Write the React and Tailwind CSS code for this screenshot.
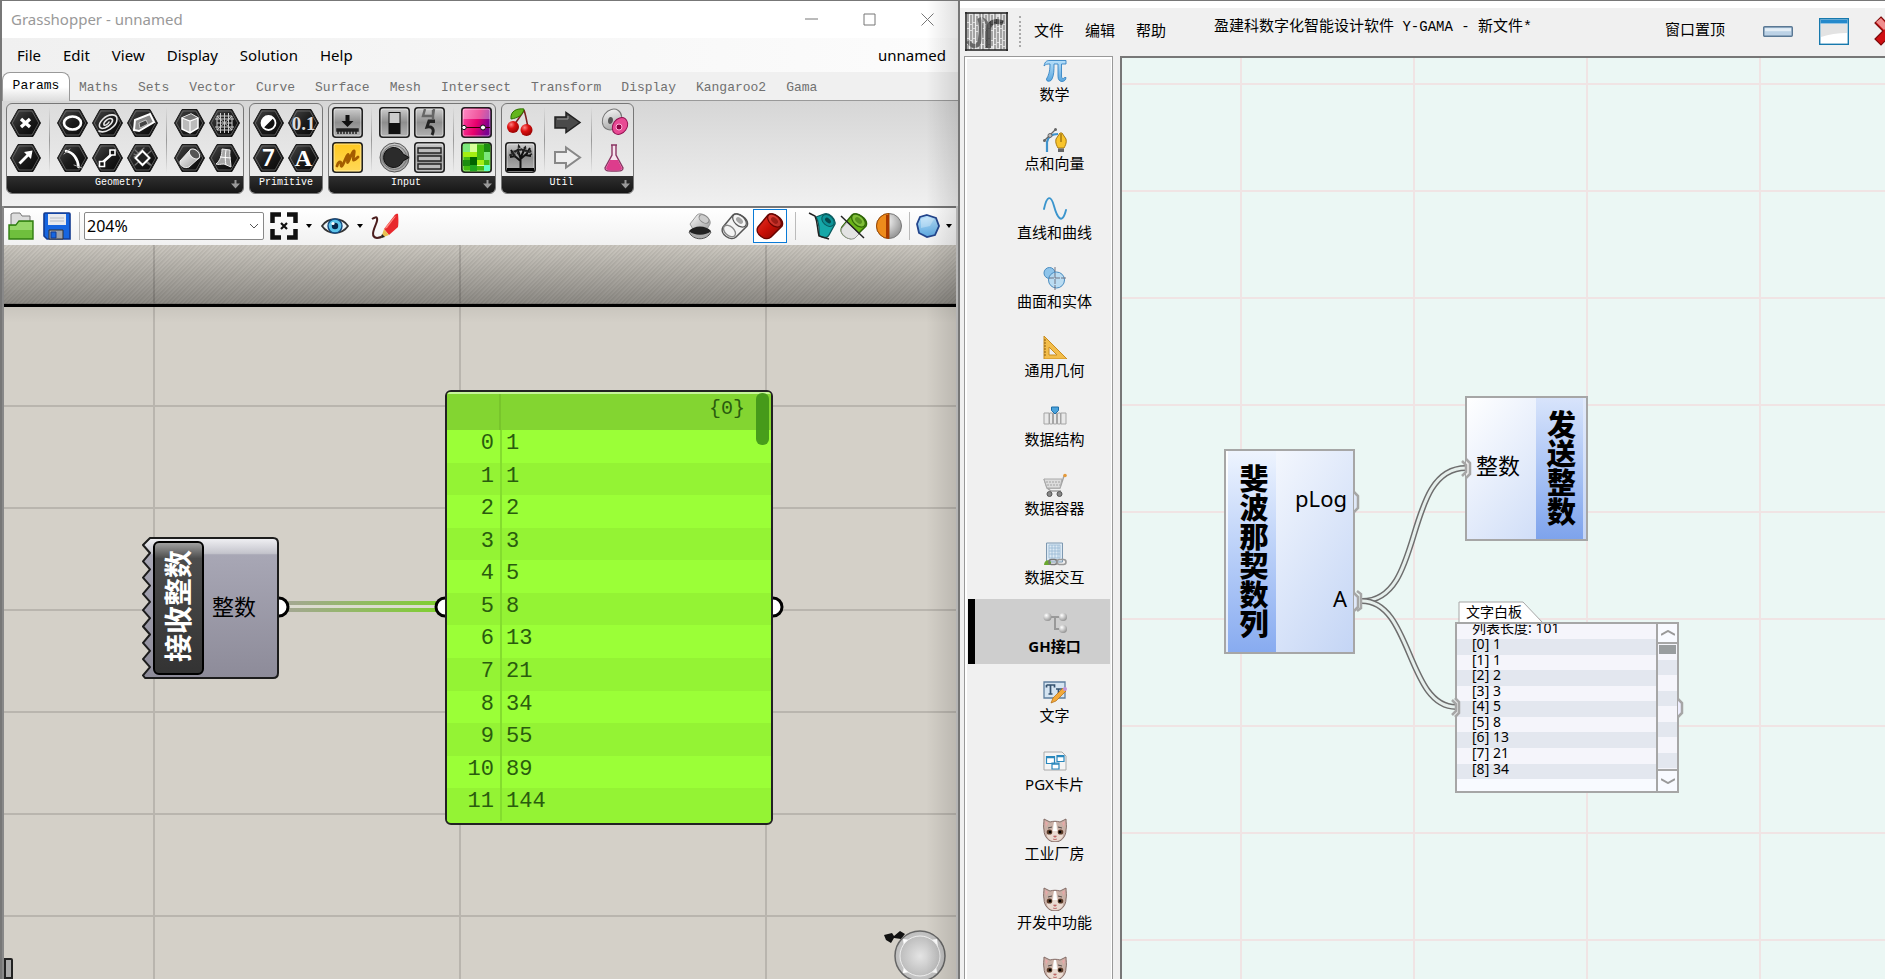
import React from "react";

const FIB = [1, 1, 2, 3, 5, 8, 13, 21, 34, 55, 89, 144];
const TABS = ["Maths", "Sets", "Vector", "Curve", "Surface", "Mesh", "Intersect", "Transform", "Display", "Kangaroo2", "Gama"];

function SharedGradients() {
  return (
    <svg className="absolute size-0" aria-hidden="true">
      <defs>
        <linearGradient id="hex" x1="0" y1="0" x2="1" y2="1">
          <stop offset="0" stopColor="#4a4a4a" />
          <stop offset="0.5" stopColor="#1c1c1c" />
          <stop offset="1" stopColor="#050505" />
        </linearGradient>
        <linearGradient id="steel" x1="0" y1="0" x2="0" y2="1">
          <stop offset="0" stopColor="#d0d0d0" />
          <stop offset="0.5" stopColor="#8e8e8e" />
          <stop offset="1" stopColor="#b4b4b4" />
        </linearGradient>
        <linearGradient id="silver" x1="0" y1="0" x2="1" y2="1">
          <stop offset="0" stopColor="#ffffff" />
          <stop offset="1" stopColor="#9a9a9a" />
        </linearGradient>
        <linearGradient id="pink" x1="0" y1="0" x2="1" y2="0.3">
          <stop offset="0" stopColor="#ff4fa8" />
          <stop offset="0.6" stopColor="#e8006c" />
          <stop offset="1" stopColor="#7c0090" />
        </linearGradient>
        <linearGradient id="yellow" x1="0" y1="0" x2="0" y2="1">
          <stop offset="0" stopColor="#ffc81e" />
          <stop offset="1" stopColor="#ffd95a" />
        </linearGradient>
        <linearGradient id="blue" x1="0" y1="0" x2="0" y2="1">
          <stop offset="0" stopColor="#b8e0fa" />
          <stop offset="1" stopColor="#5aa6de" />
        </linearGradient>
        <linearGradient id="red" x1="0" y1="0" x2="1" y2="1">
          <stop offset="0" stopColor="#e8382c" />
          <stop offset="0.5" stopColor="#c81006" />
          <stop offset="1" stopColor="#7a0600" />
        </linearGradient>
        <radialGradient id="cherry" cx="0.35" cy="0.3" r="0.8">
          <stop offset="0" stopColor="#ff8080" />
          <stop offset="0.4" stopColor="#dd1010" />
          <stop offset="1" stopColor="#8c0000" />
        </radialGradient>
        <radialGradient id="ball" cx="0.35" cy="0.3" r="0.8">
          <stop offset="0" stopColor="#ffffff" />
          <stop offset="1" stopColor="#8a8a8a" />
        </radialGradient>
        <radialGradient id="compass" cx="0.5" cy="0.5" r="0.5">
          <stop offset="0" stopColor="#e4e4e4" />
          <stop offset="1" stopColor="#bdbdbd" />
        </radialGradient>
      </defs>
    </svg>
  );
}

function Hex({ children }) {
  return (
    <svg viewBox="0 0 31 28" className="h-7 w-[31px]" aria-hidden="true">
      <polygon points="0.5,14 8,0.5 23,0.5 30.5,14 23,27.5 8,27.5" fill="url(#hex)" stroke="#1a1a1a" />
      <polygon points="2.3,14 9,2 22,2 28.7,14 22,26 9,26" fill="none" stroke="#777" strokeWidth="0.7" />
      {children}
    </svg>
  );
}

function Tile({ fill = "url(#steel)", children }) {
  return (
    <svg viewBox="0 0 31 31" className="size-[31px]" aria-hidden="true">
      <rect x="0.8" y="0.8" width="29.4" height="29.4" rx="3" fill={fill} stroke="#222" strokeWidth="1.6" />
      <rect x="2.2" y="2.2" width="26.6" height="26.6" rx="2" fill="none" stroke="#fff" strokeOpacity="0.5" strokeWidth="0.8" />
      {children}
    </svg>
  );
}

const w = { fill: "none", stroke: "#fff", strokeWidth: 2, strokeLinecap: "round", strokeLinejoin: "round" };

const ICONS = {
  Point: <Hex><path {...w} strokeWidth="3.4" strokeLinecap="butt" d="M11 10l9 8M20 10l-9 8" /></Hex>,
  Vector: <Hex><path d="M8.5 18.500l8-8-2.500-2.500 8.500-1.500-1.500 8.500-2.500-2.500-8 8z" fill="#fff" /></Hex>,
  Circle: <Hex><ellipse cx="15.500" cy="14" rx="8.500" ry="6.500" {...w} strokeWidth="2.600" /></Hex>,
  "Circular Arc": <Hex><path {...w} strokeWidth="2.600" d="M9 7c7 1 12 8 12.500 16" /><path {...w} stroke="#aaa" strokeWidth="1" d="M7 10l6-5M17 21l8 3" /></Hex>,
  Curve: <Hex><path {...w} stroke="#e6e6e6" strokeWidth="1.600" d="M7 22c6 3 18-4 18-12 0-6-9-5-14 0-6 6-4 11 2 9 5-2 9-7 7-9-3-2-9 3-8 6 1 1 4-1 5-3" /></Hex>,
  Line: <Hex><path {...w} strokeWidth="2.600" d="M10.500 18.500l9.500-8.500" /><path d="M7.500 17.500h5v5h-5zM18 6h5v5h-5z" fill="#111" stroke="#fff" strokeWidth="1.600" /></Hex>,
  Plane: <Hex><path d="M8 11l15-6 4 8-15 9-5-1z" fill="#8a8a8a" stroke="#fff" strokeWidth="2" /><path d="M12 14l7-3 2 4-8 4z" fill="#444" stroke="#ddd" strokeWidth="0.800" /></Hex>,
  Rectangle: <Hex><path {...w} stroke="#777" strokeWidth="1.200" d="M7 10l16 11M8 21L24 7M8 6l16 15M7 13L17 4" /><path d="M15.500 7l7 7-7 7-7-7z" fill="#222" stroke="#fff" strokeWidth="2" /></Hex>,
  Box: <Hex><path d="M8 9l9-4 7 4v10l-8 5-8-4z" fill="#bbb" stroke="#fff" strokeWidth="1.500" /><path d="M8 9l9-4 7 4-8 3z" fill="#777" /><path d="M8 9l8 3 8-3M16 12v12" stroke="#fff" fill="none" strokeWidth="1.200" /></Hex>,
  Brep: <Hex><path d="M6 17L16 6l9 8-10 9c-4 2-10-1-9-6z" fill="url(#silver)" stroke="#eee" /><ellipse cx="20.500" cy="10" rx="6" ry="4" transform="rotate(40 20.500 10)" fill="#555" stroke="#eee" /></Hex>,
  Mesh: <Hex><path stroke="#ccc" fill="none" strokeWidth="1" d="M8 7h15v14H8zM8 14h15M15.500 4v20M8 7l15 14M23 7L8 21M6 10h19M6 18h19M11.500 4v20M19.500 4v20" /></Hex>,
  Surface: <Hex><path d="M13 5l8 1c-1 6 1 12 1 17l-7-3c-3 0-6 1-8 0 4-3 6-9 6-15z" fill="#a5a5a5" stroke="#eee" /><path d="M11 13l11 1M17 6c-1 6-1 10 0 15" stroke="#fff" fill="none" /></Hex>,
  Boolean: <Hex><circle cx="15.500" cy="14" r="7" fill="#111" /><path d="M8.500 14a7 7 0 0 1 12-5l-10 10a7 7 0 0 1-2-5z" fill="#fff" /><circle cx="15.500" cy="14" r="7" {...w} strokeWidth="1.800" /></Hex>,
  Integer: <Hex><text x="15.500" y="22" textAnchor="middle" fill="#fff" fontSize="22" fontWeight="700" fontFamily="Lato, sans-serif">7</text></Hex>,
  Number: <Hex><text x="15.500" y="21" textAnchor="middle" fill="#ddd" fontSize="19" fontWeight="700" fontFamily="Liberation Serif, serif">0.1</text></Hex>,
  Text: <Hex><text x="15.500" y="22" textAnchor="middle" fill="#fff" fontSize="24" fontWeight="700" fontFamily="Liberation Serif, serif">A</text></Hex>,
  Button: <Tile><path d="M13.500 8h4v6h4l-6 6-6-6h4z" fill="#111" /><path d="M5 22h21v2H5zM6 24v3M9 24v3M12 24v3M15 24v3M18 24v3M21 24v3M24 24v3" stroke="#222" strokeWidth="1.500" fill="#222" /></Tile>,
  Sketch: <Tile fill="url(#yellow)"><path d="M5 24c1-4 4-6 4-2s1 3 4-4 4-7 3-2-1 7 2 0 5-10 4-4-2 9 4 3" fill="none" stroke="#a35c00" strokeWidth="2.800" strokeLinecap="round" strokeLinejoin="round" /></Tile>,
  Toggle: <Tile><rect x="9.500" y="5" width="12" height="22" fill="#111" /><rect x="10.500" y="6" width="10" height="10" fill="#ccc" /></Tile>,
  Knob: (
    <svg viewBox="0 0 31 31" className="size-[31px]" aria-hidden="true">
      <circle cx="15.500" cy="15.500" r="14.500" fill="url(#steel)" stroke="#555" />
      <circle cx="15.500" cy="15.500" r="12" fill="none" stroke="#777" />
      <path d="M30 15.500l-6 3.500a10 10 0 1 1 0-7z" fill="#2b2b2b" stroke="#111" />
    </svg>
  ),
  Scroller: <Tile><path d="M11 2l-2 7h10l1-7M19 3v9" stroke="#666" strokeWidth="2.400" fill="none" /><path d="M21 14h-6l-2 6c5-1 8 2 5 8M14 14.500h7" stroke="#222" strokeWidth="3" fill="none" /></Tile>,
  "Value List": <Tile><path d="M4 6h23v5H4zM4 14h23v5H4zM4 22h23v5H4z" fill="#bbb" stroke="#222" strokeWidth="1.400" /></Tile>,
  Gradient: <Tile fill="url(#pink)"><path d="M2 2h27v10H2z" fill="#fff" fillOpacity="0.35" /><path d="M2 20.500h27" stroke="#300" strokeWidth="1.200" /><circle cx="3" cy="20.500" r="2.200" fill="#fff" stroke="#111" /><circle cx="22" cy="20.500" r="2.500" fill="#fff" stroke="#111" /></Tile>,
  Swatches: (
    <Tile fill="#44bb11">
      <path d="M2 2h7v8H2zM23 10h6v8h-6z" fill="#7be87b" />
      <path d="M9 2h7v8H9zM16 18h7v6h-7z" fill="#d8ff9a" />
      <path d="M2 10h14v5H2zM16 18h7v5h-7z" fill="#a4ee12" />
      <path d="M9 15h7v8H9z" fill="#006400" /><path d="M23 2h6v8h-6zM2 18h7v6H2z" fill="#1d8c10" />
      <path d="M23 23h6v6h-6z" fill="#5fffc0" /><path d="M9 23h7v6H9z" fill="#1fa51f" />
    </Tile>
  ),
  "Cherry Picker": (
    <svg viewBox="0 0 31 31" className="size-[31px]" aria-hidden="true">
      <path d="M19 3c-3 7-7 9-10 16M19 3c2 6 3 12 4 18" fill="none" stroke="#7a2020" strokeWidth="1.600" />
      <path d="M6 12c-1-8 6-11 13-10-1 6-6 9-13 10z" fill="#63b51c" stroke="#2e7000" />
      <circle cx="8" cy="20" r="6" fill="url(#cherry)" /><circle cx="21.500" cy="23" r="6" fill="url(#cherry)" />
    </svg>
  ),
  "Param Viewer": <Tile><path d="M2 26h27v3H2z" fill="#000" /><path d="M15.500 27V16M15.500 19l-7-6M15.500 17l7-6M15.500 16l-3-9M15.500 16l4-9M10 14l-5 1M20 13l6 1M9 13L6 8M22 11l3-5" stroke="#111" strokeWidth="2" fill="none" /><path d="M5 14l2-3 2 2 1-5 3 3 1-6 3 4 3-3 1 4 4-1 1 4" stroke="#222" strokeWidth="2.600" strokeDasharray="2 1" fill="none" /></Tile>,
  "Data Input": <svg viewBox="0 0 31 31" className="size-[31px]" aria-hidden="true"><path d="M3 10h11V5.500l14 10-14 10V21H3z" fill="#4a4a4a" stroke="#222" strokeWidth="1.500" /><path d="M5 12h11V9" stroke="#999" fill="none" /></svg>,
  "Data Output": <svg viewBox="0 0 31 31" className="size-[31px]" aria-hidden="true"><path d="M3 10h11V5.500l14 10-14 10V21H3z" fill="#eee" stroke="#888" strokeWidth="2" /></svg>,
  Cluster: (
    <svg viewBox="0 0 31 31" className="size-[31px]" aria-hidden="true">
      <ellipse cx="13" cy="12.500" rx="9" ry="11" transform="rotate(35 13 12.500)" fill="url(#silver)" stroke="#777" />
      <path d="M9 14c0-5 5-5 5-1s-5 6-5 1z" fill="#555" />
      <ellipse cx="21" cy="19" rx="7" ry="9" transform="rotate(35 21 19)" fill="#e84a94" stroke="#901050" />
      <circle cx="20" cy="20" r="3" fill="#8c0040" stroke="#ffb0d8" />
    </svg>
  ),
  Flask: (
    <svg viewBox="0 0 31 31" className="size-[31px]" aria-hidden="true">
      <path d="M12 3h6M13 3v10L6 26c0 3 2 3 9 3s9 0 9-3L17 13V3" fill="#f6e4ee" stroke="#8a3563" strokeWidth="1.400" />
      <path d="M11 18h8l4 8c0 2-2 2.500-8 2.500S7 28 7 26z" fill="#dd3c8c" />
    </svg>
  ),
};

const GROUPS = [
  { name: "Geometry", more: true, blocks: [[["Point", "Vector"]], [["Circle", "Circular Arc"], ["Curve", "Line"], ["Plane", "Rectangle"]], [["Box", "Brep"], ["Mesh", "Surface"]]] },
  { name: "Primitive", blocks: [[["Boolean", "Integer"], ["Number", "Text"]]] },
  { name: "Input", more: true, blocks: [[["Button", "Sketch"]], [["Toggle", "Knob"], ["Scroller", "Value List"]], [["Gradient", "Swatches"]]] },
  { name: "Util", more: true, blocks: [[["Cherry Picker", "Param Viewer"]], [["Data Input", "Data Output"]], [["Cluster", "Flask"]]] },
];

function RibbonGroup({ group }) {
  return (
    <section className="flex h-[91px] flex-col overflow-hidden rounded-md border border-[#777] bg-linear-to-b from-[#dcdcdc] to-[#efefef]">
      <div className="flex flex-1 items-center px-px">
        {group.blocks.map((block, i) => (
          <React.Fragment key={i}>
            {i > 0 && <span className="flex h-[66px] w-3 justify-center"><span className="w-px bg-linear-to-b from-transparent via-[#999] to-transparent" /></span>}
            {block.map((col) => (
              <div key={col[0]} className="flex flex-col">
                {col.map((n) => (
                  <button key={n} type="button" aria-label={n} className="flex h-[35px] w-[35px] items-center justify-center">{ICONS[n]}</button>
                ))}
              </div>
            ))}
          </React.Fragment>
        ))}
      </div>
      <footer className="flex h-[17px] bg-linear-to-b from-[#303030] to-[#161616] font-['Liberation_Mono',monospace] text-[10px] leading-[14px] text-white">
        <span className="flex-1 text-center">{group.name}</span>
        {group.more && (
          <svg viewBox="0 0 9 9" className="mr-[3px] mt-1 size-[9px]" aria-hidden="true"><path d="M3.500 0h2v3.500H9l-4.500 5L0 3.500h3.500z" fill="#999" /></svg>
        )}
      </footer>
    </section>
  );
}

function Capsule({ body, line, extra }) {
  return (
    <svg viewBox="0 0 28 28" className="size-7" aria-hidden="true">
      <path d="M2 15L12 3c4-4 17 4 14 11L15 25C10 30-2 22 2 15z" fill={body} stroke={line} strokeWidth="1.500" />
      <ellipse cx="18.500" cy="8.500" rx="8" ry="5" transform="rotate(42 18.500 8.500)" fill="#fff" fillOpacity="0.15" stroke={line} strokeWidth="1.200" />
      <ellipse cx="18.500" cy="8.500" rx="4" ry="2.500" transform="rotate(42 18.500 8.500)" fill={line} fillOpacity="0.5" />
      {extra}
    </svg>
  );
}

function Caret() {
  return <svg viewBox="0 0 6 4" className="h-1 w-1.5 shrink-0" aria-hidden="true"><path d="M0 0h6L3 4z" fill="#000" /></svg>;
}

function ToolButton({ label, children, className = "" }) {
  return <button type="button" aria-label={label} className={`flex h-[34px] shrink-0 items-center justify-center ${className}`}>{children}</button>;
}

function CanvasToolbar() {
  return (
    <div className="flex h-[39px] shrink-0 items-center border-t-2 border-[#777] bg-linear-to-b from-white to-[#f1f1f1] pb-0.5 pl-1 pr-1">
      <ToolButton label="Open" className="w-[26px]">
        <svg viewBox="0 0 26 28" className="h-7 w-[26px]" aria-hidden="true">
          <path d="M3 15V2l2-1h7l2 3h8v14H3z" fill="#ddd" stroke="#777" />
          <path d="M1 27V13h7l3-4h14v18z" fill="#6fbf3d" stroke="#2f7d10" strokeWidth="1.400" /><path d="M2 14h6l3-4h13v8H2z" fill="#a6df7c" fillOpacity="0.700" />
        </svg>
      </ToolButton>
      <ToolButton label="Save" className="ml-[9px] w-7">
        <svg viewBox="0 0 28 28" className="size-7" aria-hidden="true">
          <path d="M1 2q0-1 1-1h24q1 0 1 1v25H4l-3-3z" fill="#1565e0" stroke="#123a90" strokeWidth="1.600" />
          <path d="M5 2h18v11H5z" fill="#e8eaee" /><path d="M7 6h14M7 9h14" stroke="#b8bcc4" />
          <path d="M6 18h14v9H6z" fill="#9aa0aa" stroke="#333" /><path d="M8 20h5v6H8z" fill="#1565e0" stroke="#123a90" />
        </svg>
      </ToolButton>
      <span className="ml-2 h-7 w-px bg-[#bbb]" />
      <div className="ml-1 flex h-7 w-[180px] items-center rounded-[2px] border border-[#888] bg-white px-0.5">
        <select aria-label="Zoom" defaultValue="204%" className="h-full flex-1 appearance-none bg-white text-[16px] leading-none text-black outline-none">
          <option>204%</option>
          <option>100%</option>
          <option>50%</option>
        </select>
        <svg viewBox="0 0 10 6" className="pointer-events-none mr-0.5 h-1.5 w-2.5" aria-hidden="true"><path d="M1 1l4 4 4-4" fill="none" stroke="#555" /></svg>
      </div>
      <ToolButton label="Zoom extents" className="ml-1.5 w-7">
        <svg viewBox="0 0 28 28" className="size-7" aria-hidden="true">
          <path d="M2.500 11V2.500H11M17 2.500h8.500V11M25.500 17v8.500H17M11 25.500H2.500V17" fill="none" stroke="#111" strokeWidth="4.500" />
          <path d="M11 11l6 6M17 11l-6 6" stroke="#111" strokeWidth="2.200" />
        </svg>
      </ToolButton>
      <span className="ml-2"><Caret /></span>
      <ToolButton label="Preview" className="ml-[9px] w-7">
        <svg viewBox="0 0 28 20" className="h-5 w-7" aria-hidden="true">
          <path d="M1 10C7 1 21 1 27 10 21 19 7 19 1 10z" fill="#eef4f6" stroke="#333" strokeWidth="1.800" />
          <circle cx="14" cy="10" r="7" fill="#5cc4ea" stroke="#134a80" strokeWidth="1.400" /><circle cx="14" cy="10" r="3.200" fill="#06264a" /><circle cx="12" cy="7.500" r="1.600" fill="#fff" />
        </svg>
      </ToolButton>
      <span className="ml-2"><Caret /></span>
      <ToolButton label="Sketch" className="ml-2 w-7">
        <svg viewBox="0 0 28 28" className="size-7" aria-hidden="true">
          <path d="M1 7c6-4 6 0 4 5s-6 13 1 14c3 0 5-1 7-3" fill="none" stroke="#4a1c1c" strokeWidth="2" />
          <path d="M13 17L23 4c2-3 4-2 4-2s1 8 0 13l-9 8z" fill="#e8282c" /><path d="M16 16L25 4l-2 1-10 12z" fill="#ff8a80" />
          <path d="M13 17l5 6-8 3z" fill="#e8c050" /><path d="M10 26l1-4 3 3z" fill="#222" />
        </svg>
      </ToolButton>
      <div className="ml-auto flex items-center">
        <ToolButton label="No preview" className="w-7">
          <svg viewBox="0 0 28 28" className="size-7" aria-hidden="true">
            <path d="M4 12L11 3c4-4 15 3 13 9l-4 7H8z" fill="url(#silver)" stroke="#999" /><ellipse cx="18" cy="7" rx="5.500" ry="3.500" transform="rotate(35 18 7)" fill="#ccc" stroke="#888" />
            <path d="M3 20c5-5 17-5 22 0-4 9-18 9-22 0z" fill="#aaa" stroke="#555" /><path d="M3 19c5-6 17-6 22 0-5 5-17 5-22 0z" fill="#222" />
          </svg>
        </ToolButton>
        <ToolButton label="Wireframe preview" className="ml-[7px] w-7">
          <Capsule body="#f3f3f3" line="#555" extra={<ellipse cx="8.500" cy="19" rx="7" ry="4.500" transform="rotate(42 8.500 19)" fill="none" stroke="#888" strokeWidth="1.400" />} />
        </ToolButton>
        <ToolButton label="Shaded preview" className="ml-1 w-[34px] border border-[#0a7ad6] bg-white"><Capsule body="url(#red)" line="#6a0500" /></ToolButton>
        <span className="ml-2 h-7 w-px bg-[#bbb]" />
        <ToolButton label="Draw selected only" className="ml-3 w-7">
          <svg viewBox="0 0 28 28" className="size-7" aria-hidden="true">
            <path d="M8 5l8-3c5-2 12 5 11 10l-6 11c-2 4-8 3-10 0 0-7 1-11-3-18z" fill="#16a8a8" stroke="#0a5a5e" strokeWidth="1.300" />
            <ellipse cx="20" cy="8.500" rx="7" ry="5" transform="rotate(42 20 8.500)" fill="#0d9498" stroke="#0a5a5e" /><ellipse cx="20" cy="8.500" rx="3.500" ry="2" transform="rotate(42 20 8.500)" fill="#06484c" />
            <path d="M1 1l6 3c3 7 2 12 4 20l10 3" fill="none" stroke="#222" strokeWidth="1.500" />
          </svg>
        </ToolButton>
        <ToolButton label="Document preview settings" className="ml-1 w-7">
          <Capsule body="#6ab417" line="#2f6606" extra={<g><path d="M2 16L7 10 19 22l-4 4C10 30-2 22 2 16z" fill="#e3e3e3" stroke="#999" /><path d="M1 4l23 22" stroke="#222" strokeWidth="1.500" /></g>} />
        </ToolButton>
        <ToolButton label="Preview quality" className="ml-[7px] w-7">
          <svg viewBox="0 0 28 28" className="size-7" aria-hidden="true">
            <circle cx="14" cy="14" r="12.500" fill="url(#ball)" stroke="#777" /><path d="M14 1.500a12.500 12.500 0 0 0 0 25z" fill="#ee8c1c" stroke="#a04a00" /><path d="M11 26V3q3 0 3-1.500v25z" fill="#a83a00" />
          </svg>
        </ToolButton>
        <span className="ml-1.5 h-7 w-px bg-[#bbb]" />
        <ToolButton label="Mesh settings" className="ml-1.5 w-6">
          <svg viewBox="0 0 24 24" className="size-6" aria-hidden="true"><path d="M11 1l9 3 3 8-4 9-8 2-8-4-2-9 3-7z" fill="url(#blue)" stroke="#23458c" strokeWidth="1.800" /><path d="M5 5l7-2 6 2-4 7-9 2z" fill="#fff" fillOpacity="0.300" /></svg>
        </ToolButton>
        <span className="ml-1.5"><Caret /></span>
      </div>
    </div>
  );
}

function ReceiverNode() {
  let d = "M8 1";
  for (let i = 0; i < 9; i++) {
    d += ` L1 ${8 + i * 16.3}`;
    if (i < 8) d += ` L8 ${16 + i * 16.3}`;
  }
  d += " L3 141 H131 Q136 141 136 136 V6 Q136 1 131 1 Z";
  return (
    <div className="absolute left-[138px] top-[292px] h-[142px] w-[137px]">
      <svg viewBox="0 0 137 142" className="absolute inset-0 size-full overflow-visible" aria-hidden="true">
        <defs>
          <linearGradient id="recv" x1="0" y1="0" x2="0" y2="1">
            <stop offset="0" stopColor="#f2f2f5" /><stop offset="0.110" stopColor="#c4c4cc" /><stop offset="0.120" stopColor="#a8a7b5" /><stop offset="1" stopColor="#8d8b99" />
          </linearGradient>
        </defs>
        <path d={d} fill="url(#recv)" stroke="#1c1c1c" strokeWidth="2" strokeLinejoin="round" />
        <path d="M137 61a9 9 0 0 1 0 18z" fill="#fff" /><path d="M137 61a9 9 0 0 1 0 18" fill="none" stroke="#000" strokeWidth="3" />
      </svg>
      <div className="relative flex h-full items-center pl-[11px]">
        <div className="flex h-[134px] w-[51px] items-center justify-center rounded-md border-2 border-black bg-linear-to-b from-[#a0a0a0] from-0% via-[#4c4c4c] via-12% to-[#333] pr-0.5 pb-1">
          <span className="rotate-180 text-[28px] leading-[32px] font-bold text-white [text-orientation:sideways] [writing-mode:vertical-rl]">接收整数</span>
        </div>
        <span className="ml-2 pb-1 text-[22px] leading-none text-black">整数</span>
      </div>
    </div>
  );
}

function GreenPanel() {
  return (
    <div className="absolute left-[441px] top-[145px] h-[435px] w-[328px]">
      <svg viewBox="0 0 328 435" className="absolute inset-0 size-full overflow-visible" aria-hidden="true">
        <path d="M0 208a9 9 0 0 0 0 18z" fill="#fff" /><path d="M0 208a9 9 0 0 0 0 18" fill="none" stroke="#000" strokeWidth="3" />
        <path d="M328 208a9 9 0 0 1 0 18z" fill="#fff" /><path d="M328 208a9 9 0 0 1 0 18" fill="none" stroke="#000" strokeWidth="3" />
      </svg>
      <div className="relative size-full overflow-hidden rounded-md border-2 border-[#222] bg-[#94f533]">
        <div className="flex h-[38px] border-t-2 border-[#c8f59a] bg-[#83d531] pr-[26px] font-['Liberation_Mono',monospace] text-[20px] leading-[30px] text-[#2a5c0e]">
          <span className="w-[54px] border-r-2 border-[#78c52b]" />
          <span className="ml-auto">{"{0}"}</span>
        </div>
        <table className="h-[391px] w-full border-collapse font-['Liberation_Mono',monospace] text-[22px] leading-[28px] text-[#2a5c0e]">
          <tbody>
            {FIB.map((n, i) => (
              <tr key={i} className="odd:bg-[#9bff37] even:bg-[#94f334]">
                <td className="w-[54px] border-r-2 border-[#84dd2e] p-0 pr-1.5 text-right align-top">{i}</td>
                <td className="p-0 pl-1 align-top">{n}</td>
              </tr>
            ))}
          </tbody>
        </table>
        <div className="absolute right-0.5 top-px h-[52px] w-[13px] rounded-md bg-[#3f9318]/90" />
      </div>
    </div>
  );
}

function Grasshopper() {
  return (
    <section className="relative flex h-full min-w-0 flex-col border-l-2 border-t border-[#777] bg-[#f0f0f0] font-['Noto_Sans','Noto_Sans_CJK_SC',sans-serif]">
      <header className="flex h-[37px] shrink-0 items-center bg-white pl-[9px] pr-6">
        <h1 className="text-[15px] text-[#999]">Grasshopper - unnamed</h1>
        <div className="ml-auto flex items-center gap-[45px] text-[#777]">
          <button type="button" aria-label="Minimize"><svg viewBox="0 0 13 13" className="size-[13px]"><path d="M0 6h13" stroke="currentColor" /></svg></button>
          <button type="button" aria-label="Maximize"><svg viewBox="0 0 13 13" className="size-[13px]"><path d="M1 1h11v11H1z" fill="none" stroke="currentColor" /></svg></button>
          <button type="button" aria-label="Close"><svg viewBox="0 0 13 13" className="size-[13px]"><path d="M.5.5l12 12M12.500.5l-12 12" stroke="currentColor" /></svg></button>
        </div>
      </header>
      <nav className="flex h-[34px] shrink-0 items-center gap-[22px] bg-linear-to-r from-[#f0f0f0] to-[#fcfcfc] pl-[15px] pr-3 text-[15px] text-black">
        {["File", "Edit", "View", "Display", "Solution", "Help"].map((m) => <button key={m} type="button">{m}</button>)}
        <span className="ml-auto">unnamed</span>
      </nav>
      <div className="flex h-[29px] shrink-0 font-['Liberation_Mono',monospace] text-[13px]">
        <button type="button" className="w-[68px] rounded-t-lg border border-b-0 border-[#999] bg-linear-to-b from-white from-50% to-[#dcdcdc] pb-0.5 text-black">Params</button>
        <div className="flex flex-1 items-center gap-5 border-b border-[#999] pl-[9px] pt-1 text-[#707070]">
          {TABS.map((t) => <button key={t} type="button">{t}</button>)}
        </div>
      </div>
      <div className="flex h-[105px] shrink-0 gap-[5px] bg-linear-to-b from-[#d6d6d6] to-[#f0f0f0] pl-1 pt-0.5">
        {GROUPS.map((g) => <RibbonGroup key={g.name} group={g} />)}
      </div>
      <div className="flex min-h-0 flex-1 flex-col border-r-2 border-l-2 border-r-[#ccc] border-l-[#888]">
        <CanvasToolbar />
        <div className="relative min-h-0 flex-1 overflow-hidden bg-[#d4d0c8] bg-[linear-gradient(to_right,#b9b5ae_2px,transparent_2px),linear-gradient(to_bottom,#b9b5ae_2px,transparent_2px)] bg-[size:306px_102px] bg-[position:149px_58px]">
          <div className="h-[62px] border-b-[3px] border-black bg-[linear-gradient(to_bottom,rgba(0,0,0,0.04),rgba(0,0,0,0.34)),repeating-linear-gradient(135deg,rgba(0,0,0,0.06)_0px,rgba(0,0,0,0.06)_1px,transparent_2px,transparent_3px)]" />
          <div className="h-4 bg-linear-to-b from-black/5 to-transparent" />
          <svg className="absolute inset-0 size-full" aria-hidden="true">
            <defs>
              <linearGradient id="wire" gradientUnits="userSpaceOnUse" x1="284" y1="0" x2="434" y2="0"><stop offset="0" stopColor="#a3a792" /><stop offset="1" stopColor="#7fcf30" /></linearGradient>
            </defs>
            <path d="M284 356h150v4H284zM284 363h150v4H284z" fill="url(#wire)" />
            <path d="M284 360h150v3H284z" fill="#dcdcd0" />
          </svg>
          <ReceiverNode />
          <GreenPanel />
          <svg viewBox="0 0 64 56" className="absolute right-[9px] bottom-[-4px] h-14 w-16" aria-hidden="true">
            <path d="M1 8l8-2 2 3 6-5 5 3-4 5-7-1-3 5-5-3z" fill="#111" />
            <circle cx="37" cy="29" r="25" fill="url(#compass)" stroke="#666" strokeWidth="1.500" />
            <path d="M20 12l8 1-7 7zM54 12l1 8-8-7zM20 46l1-8 7 7zM54 46l-8-1 7-7z" fill="#fff" />
            <circle cx="37" cy="29" r="20" fill="url(#compass)" stroke="#eee" />
          </svg>
          <div className="absolute bottom-0 left-0 h-[21px] w-[9px] rounded-tr-[2px] border-2 border-[#222] bg-[#aaa]" />
        </div>
      </div>
      <div className="pointer-events-none absolute inset-y-0 right-0 w-8 bg-linear-to-r from-transparent to-black/12" />
    </section>
  );
}

function Small({ children }) {
  return <svg viewBox="0 0 24 24" className="size-6" aria-hidden="true">{children}</svg>;
}

const CAT = (
  <Small>
    <path d="M1 1l6 3c3-1 7-1 10 0l6-3c0 4 1 7 0 11 0 7-5 12-11 12S1 19 1 12C0 8 1 5 1 1z" fill="#c9b0a6" stroke="#7a625c" strokeWidth="0.900" />
    <path d="M2 3l3 2-2 4zM22 3l-3 2 2 4z" fill="#e8a8a8" />
    <path d="M11 4h2l2 9c3 1 5 3 5 5-1 3-4 5-8 5s-7-2-8-5c0-2 2-4 5-5z" fill="#eadbd2" />
    <path d="M11 4h2l1 9h-4z" fill="#fff" />
    <ellipse cx="6.500" cy="14" rx="2.800" ry="2.600" fill="#5a3b28" /><ellipse cx="17.500" cy="14" rx="2.800" ry="2.600" fill="#5a3b28" />
    <circle cx="7" cy="14" r="1.300" fill="#000" /><circle cx="17" cy="14" r="1.300" fill="#000" />
    <path d="M5 10l4-1M19 10l-4-1" stroke="#333" strokeWidth="0.800" /><path d="M10.500 18h3L12 19.500zM10 21q2 1 4 0" fill="#d06a6a" stroke="#a55" strokeWidth="0.600" />
  </Small>
);

const CATEGORIES = [
  ["数学", <Small><path d="M1 7C2 2 4 1.500 7 1.500h16v3.500h-4.500v12c0 3 2 3 3 1.500l1.500 0c0 5-8 6-8-1V5h-4c0 6 0 11-2 15-1 3-6 3-5.500 0C5 17 7 14 7 5 4 5 3 5 1 7z" fill="url(#blue)" stroke="#3585c4" strokeWidth="0.900" /></Small>],
  ["点和向量", <Small><path d="M4 24V14c1-5 5-8 11-8" fill="none" stroke="#3f93cc" strokeWidth="2.200" /><path d="M1 13L13 1" stroke="#666" strokeWidth="1.200" /><circle cx="1.500" cy="12.500" r="1.500" fill="#666" /><circle cx="12.500" cy="1.500" r="1.500" fill="#666" /><circle cx="7" cy="7.500" r="2" fill="#bbb" stroke="#666" /><path d="M17 5h2l4 6c1 4-1 7-2 9h-6c-1-2-3-5-2-9z" fill="#f9c42c" stroke="#a87a10" /><path d="M18 6v8" stroke="#7a5200" /><path d="M15 20.500h6v3.500h-6z" fill="#666" /></Small>],
  ["直线和曲线", <Small><path d="M1 12C4-2 8-2 11 9s8 20 12 4" fill="none" stroke="#3b95cd" strokeWidth="1.900" strokeLinecap="round" /></Small>],
  ["曲面和实体", <Small><circle cx="6.500" cy="7" r="5.500" fill="#8ec4ea" stroke="#4a8cc0" /><circle cx="13.500" cy="14" r="8" fill="#b4d9f2" fillOpacity="0.900" stroke="#4a8cc0" /><path d="M12 1v23M6 12h18" stroke="#667" strokeDasharray="5 1" strokeWidth="0.900" /></Small>],
  ["通用几何", <Small><path d="M1 1l23 23H1z" fill="#f3bd4a" stroke="#c98d20" /><path d="M6 12l8 8H6z" fill="#efefef" stroke="#c98d20" /><path d="M1 5h2M1 8h2M1 11h2M1 14h2M1 17h2M1 20h2" stroke="#8a5c10" /></Small>],
  ["数据结构", <Small><path d="M1 9h5v11H1zM6.500 9h3v11h-3zM10.500 9h3v11h-3zM14.500 9h3v11h-3zM18 9h5v11h-5z" fill="#e9e9e9" stroke="#a5a5a5" /><path d="M8.500 3h7v3.500L12 10 8.500 6.500z" fill="#4ba3dc" stroke="#1d6ea8" /></Small>],
  ["数据容器", <Small><path d="M1 6l3 9h13l4-12M4 15l4 3h10" fill="none" stroke="#a0a0a0" strokeWidth="1.400" /><path d="M1 6h18l-2 9H4z" fill="#dcdcdc" stroke="#aaa" /><path d="M3 9h15M4 12h13" stroke="#b5b5b5" strokeDasharray="2 1" strokeWidth="1.400" /><circle cx="6.500" cy="21" r="2.500" fill="#888" stroke="#555" /><circle cx="16.500" cy="21" r="2.500" fill="#888" stroke="#555" /><circle cx="22" cy="2.500" r="1.800" fill="#e59a3a" /></Small>],
  ["数据交互", <Small><path d="M3.500 1h16v19h-16z" fill="#dce9f4" stroke="#7d98b0" /><path d="M6 3h11v13H6zM6 6h11M6 9h11M6 12h11M9 3v13M12 3v13M15 3v13" stroke="#98b8d4" fill="none" strokeWidth="0.800" /><path d="M1 23c0-5 5-6 7-3v3z" fill="#6aa82e" /><rect x="6" y="17.500" width="8" height="5" rx="2.500" fill="none" stroke="#777" strokeWidth="1.600" /><rect x="14" y="17.500" width="9" height="5" rx="2.500" fill="none" stroke="#999" strokeWidth="1.600" /></Small>],
  ["GH接口", <Small><path d="M4 6h16M12 6v12h8" fill="none" stroke="#999" strokeWidth="2" /><circle cx="4.500" cy="6" r="4" fill="url(#ball)" /><circle cx="20" cy="6" r="4" fill="url(#ball)" /><circle cx="20" cy="18" r="4" fill="url(#ball)" /></Small>],
  ["文字", <Small><path d="M1 2h21v16H1z" fill="#d5e4f1" stroke="#5f7f9f" strokeWidth="1.300" /><path d="M3.500 5h8v2.500M3.500 7.500V5M7.500 5v9M5.500 14h4M13 9h6M15.500 9v6" stroke="#34516e" strokeWidth="1.700" fill="none" /><path d="M8 23l2-5L20 8l3 3-10 10z" fill="#f3a93a" stroke="#b06a10" strokeWidth="0.700" /><circle cx="22" cy="9" r="2" fill="#c394d8" /></Small>],
  ["PGX卡片", <Small><path d="M1 3h18l4 4v14H1z" fill="#f4f4f4" stroke="#aaa" /><path d="M3.500 7.500h8v7h-8zM14 6.500h7v6h-7zM9 14h7v6H9z" fill="#fff" stroke="#2a88bd" strokeWidth="1.200" /><path d="M3.500 8.500h8M14 7.500h7M9 15h7" stroke="#2a88bd" strokeWidth="1.600" /></Small>],
  ["工业厂房", CAT],
  ["开发中功能", CAT],
  ["", CAT],
];

function Wire({ d }) {
  return (
    <g fill="none">
      <path d={d} stroke="#6e6e6e" strokeWidth="6" />
      <path d={d} stroke="#e6efec" strokeWidth="3" />
    </g>
  );
}

function GamaCanvas() {
  return (
    <div className="relative min-w-0 flex-1 overflow-hidden border-l-2 border-t-2 border-[#777] bg-[#ebf7f4] bg-[linear-gradient(to_right,#f0e4e4_2px,transparent_2px),linear-gradient(to_bottom,#f0e4e4_2px,transparent_2px)] bg-[size:173px_107px] bg-[position:118px_25px]">
      <div className="absolute left-[102px] top-[391px] flex h-[205px] w-[131px] border-2 border-[#a6a6a6] bg-linear-to-br from-white to-[#c4d5f5] pl-[2px]">
        <div className="flex w-[48px] items-center justify-center bg-linear-to-b from-[#eef4fe] to-[#88abf0] pb-0.5">
          <span className="text-[29px] leading-[32px] font-black text-black [writing-mode:vertical-rl]">斐波那契数列</span>
        </div>
        <div className="flex flex-1 flex-col items-end pr-[6px] pt-[32px] text-[22px] leading-[30px] text-black">
          <span>pLog</span>
          <span className="mt-[70px]">A</span>
        </div>
      </div>
      <div className="absolute left-[343px] top-[338px] flex h-[145px] w-[123px] border-2 border-[#a6a6a6] bg-linear-to-br from-white to-[#c4d5f5] pr-[3px]">
        <div className="flex flex-1 items-center pb-2 pl-[9px] text-[22px] leading-none text-black">整数</div>
        <div className="flex w-[47px] items-center justify-center bg-linear-to-b from-[#d8e4fb] to-[#7ea3ec] pb-0.5">
          <span className="text-[29px] leading-[32px] font-black text-black [writing-mode:vertical-rl]">发送整数</span>
        </div>
      </div>
      <div className="absolute left-[333px] top-[543px] w-[224px] text-[14px] text-black">
        <div className="relative h-[21px] w-[88px]">
          <svg viewBox="0 0 88 22" className="absolute inset-0 h-[22px] w-[88px]" aria-hidden="true"><path d="M4 22V1h64l20 21" fill="#fff" stroke="#a6a6a6" /></svg>
          <span className="relative block pl-[11px] leading-[21px]">文字白板</span>
        </div>
        <div className="relative flex h-[171px] border-2 border-[#a6a6a6] bg-[#f8faff]">
          <div className="flex-1">
            <div className="h-[15px] overflow-hidden bg-[#f5f5fb] pl-[15px] leading-[8px]">列表长度: 101</div>
            <div className="flex h-[140px] flex-col">
              {FIB.slice(0, 9).map((n, i) => (
                <div key={i} className="min-h-0 flex-1 pl-[15px] leading-[9px] odd:bg-[#e3e7ef] even:bg-[#f5f5fb]">[{i}] {n}</div>
              ))}
            </div>
          </div>
          <div className="flex w-[21px] flex-col border-l-2 border-[#a6a6a6]">
            <button type="button" aria-label="Scroll up" className="flex h-[18px] items-center justify-center"><svg viewBox="0 0 14 6" className="h-1.5 w-3.5"><path d="M0 5l7-4 7 4" fill="none" stroke="#999" strokeWidth="2" /></svg></button>
            <div className="flex-1 border-y-2 border-[#a6a6a6] bg-[repeating-linear-gradient(to_bottom,#f5f5fb_0px,#f5f5fb_16px,#e3e7ef_16px,#e3e7ef_31px)] pt-px">
              <div className="mx-px h-[9px] bg-[#999d9f]" />
            </div>
            <button type="button" aria-label="Scroll down" className="flex h-5 items-center justify-center"><svg viewBox="0 0 14 6" className="h-1.5 w-3.5"><path d="M0 1l7 4 7-4" fill="none" stroke="#999" strokeWidth="2" /></svg></button>
          </div>
        </div>
      </div>
      <svg className="pointer-events-none absolute inset-0 size-full" aria-hidden="true">
        <Wire d="M240 543C304 543 280 410 344 410" />
        <Wire d="M240 543C290 543 285 649 334 649" />
        <g fill="none" stroke="#a6a6a6" strokeWidth="2.500">
          <path d="M232 434l4 4v12l-4 4" fill="#dfe8f8" /><path d="M232 535l4 4v10l-4 4" fill="#dfe8f8" /><path d="M235 533l4 3v14l-4 3" />
          <path d="M344 401l4 4v11l-4 4" fill="#eee" /><path d="M340 403l4 4v7l-4 4" />
          <path d="M333 640l4 4v11l-4 4" fill="#eee" /><path d="M330 642l4 4v7l-4 4" />
          <path d="M556 641l4 4v10l-4 4" fill="#eef" />
        </g>
      </svg>
    </div>
  );
}

function Gama() {
  return (
    <section className="flex h-full min-w-0 flex-col overflow-hidden border-l-2 border-t border-[#777] bg-[#f0f0f0] pl-1 font-['Noto_Sans','Noto_Sans_CJK_SC',sans-serif] text-black">
      <header className="-ml-1 flex h-[55px] shrink-0 items-center border-t-[7px] border-white pb-0.5 pl-[5px] text-[15px]">
        <svg viewBox="0 0 43 39" className="h-[39px] w-[43px] shrink-0" aria-hidden="true">
          <rect width="43" height="39" fill="#dedede" />
          <path d="M14 6c3 6 2 14 1 21-1 9-8 9-12 2" fill="none" stroke="#666" strokeWidth="4" /><path d="M23 36V20c0-9 6-13 15-9" fill="none" stroke="#3c3c3c" strokeWidth="5" /><path d="M16 5c5 3 6 10 6 31h4V16c-2-6-5-10-10-11z" fill="#555" fillOpacity="0.800" />
          <path d="M3 1v37M6 3v35M9 1v36M12 4v32M15 1v36M18 1v37M21 3v33M24 1v37M27 3v32M30 1v37M33 5v32M36 1v37M39 3v34" stroke="#6a6a6a" strokeDasharray="9 1 5 1" />
          <path d="M4.500 1v37M10.500 1v37M16.500 1v37M28.500 1v37M34.500 1v37" stroke="#fff" strokeOpacity="0.500" />
          <path d="M0 1h43M1 0v39M42 0v39M0 38h43" stroke="#222" strokeWidth="1.500" />
        </svg>
        <span className="ml-[11px] h-[31px] w-0 border-l-2 border-dotted border-[#aaa]" />
        <nav className="ml-[13px] flex shrink-0 gap-[21px] pb-0.5">
          {["文件", "编辑", "帮助"].map((m) => <button key={m} type="button">{m}</button>)}
        </nav>
        <h1 className="ml-12 pb-1.5 font-['Liberation_Mono','Noto_Sans_CJK_SC',monospace] whitespace-pre">
          盈建科数字化智能设计软件<span className="text-[14px]"> Y-GAMA - </span>新文件*
        </h1>
        <button type="button" className="ml-auto shrink-0 pb-1">窗口置顶</button>
        <button type="button" aria-label="最小化" className="ml-[38px] shrink-0">
          <svg viewBox="0 0 30 11" className="h-[11px] w-[30px]"><rect x="0.700" y="0.700" width="28.600" height="9.600" rx="1" fill="#bcd2e6" stroke="#5a7894" strokeWidth="1.400" /><path d="M2 2.200h26v3H2z" fill="#e4eef6" /></svg>
        </button>
        <button type="button" aria-label="最大化" className="ml-[26px] shrink-0">
          <svg viewBox="0 0 30 27" className="h-[27px] w-[30px]"><rect x="0.700" y="0.700" width="28.600" height="25.600" fill="#fff" stroke="#1779ad" strokeWidth="1.400" /><path d="M1.500 1.500h27v4h-27z" fill="#2489cb" /><path d="M2 6h26v9q-14 0-26 4z" fill="#e3e3e3" /></svg>
        </button>
        <button type="button" aria-label="关闭" className="ml-[25px] w-[11px] shrink-0 overflow-hidden">
          <svg viewBox="0 0 30 30" className="size-[30px]"><path d="M7 1l8 8 8-8 6 6-8 8 8 8-6 6-8-8-8 8-6-6 8-8-8-8z" fill="#cf0f12" stroke="#7c0a0a" strokeWidth="1.200" /><path d="M7 2l7 8-4 4-8-8z" fill="#ef8e8e" /></svg>
        </button>
      </header>
      <div className="flex min-h-0 flex-1">
        <aside className="mr-[7px] w-[149px] shrink-0 overflow-hidden border-l border-t border-r border-[#999]">
          <div className="h-full overflow-hidden border-l-2 border-t-2 border-r border-white px-px">
            <ul className="-mt-3 flex flex-col gap-1">
              {CATEGORIES.map(([name, icon], i) => (
                <li key={i} className="shrink-0">
                  <button
                    type="button"
                    aria-label={name || "更多"}
                    className={
                      i === 8
                        ? "flex h-[65px] w-full flex-col items-center border-l-[7px] border-black bg-[#cecece] pl-[24px] pt-3 text-[15px] leading-[22px] font-bold"
                        : "flex h-[65px] w-full flex-col items-center pl-[31px] pt-3 text-[15px] leading-[22px]"
                    }
                  >
                    {icon}
                    <span>{name}</span>
                  </button>
                </li>
              ))}
            </ul>
          </div>
        </aside>
        <GamaCanvas />
      </div>
    </section>
  );
}

export default function App() {
  return (
    <main className="grid h-screen grid-cols-[958fr_927fr] overflow-hidden">
      <SharedGradients />
      <Grasshopper />
      <Gama />
    </main>
  );
}
